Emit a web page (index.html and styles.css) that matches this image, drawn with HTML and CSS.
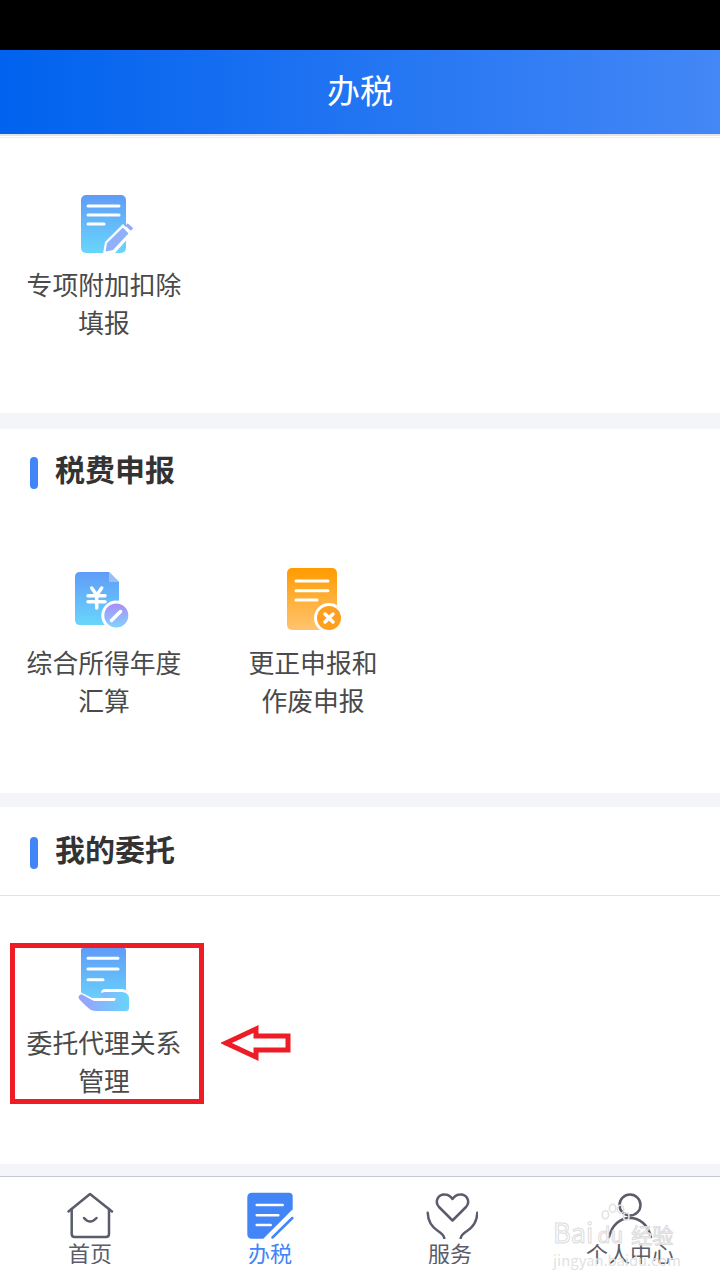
FILE: index.html
```html
<!DOCTYPE html>
<html lang="zh-CN">
<head>
    <meta charset="UTF-8">
    <meta name="viewport" content="width=device-width, initial-scale=1.0">
    <title>办税</title>
    <link rel="stylesheet" href="styles.css">
</head>
<body>
    <div class="page">
        <div class="status-bar"></div>
        <header class="top-bar">办税</header>

        <main class="content">
            <section class="panel panel-first">
                <div class="item-grid">
                    <div class="item">
                        <svg class="item-icon" viewBox="0 0 64 64">
                            <defs>
                                <linearGradient id="blueDoc" x1="0" y1="0" x2="0" y2="1">
                                    <stop offset="0" stop-color="#5f9cf8"/>
                                    <stop offset="1" stop-color="#69d6fb"/>
                                </linearGradient>
                            </defs>
                            <rect x="9" y="5" width="45" height="58" rx="5" fill="url(#blueDoc)"/>
                            <path d="M16 16H47M16 25H47M16 34H32" stroke="#fff" stroke-width="3" stroke-linecap="round"/>
                            <path d="M31 64L33 52L51 34L60 44L42 64Z" fill="#fff"/>
                            <path d="M33.500 61.500L35 53L51 37.500L56.500 43.500L41 60Z" fill="#8fb0fb"/>
                            <path d="M54.500 34.500L60 39.500" stroke="#93a8fa" stroke-width="3.500"/>
                        </svg>
                        <div class="item-name">专项附加扣除<br>填报</div>
                    </div>
                </div>
            </section>

            <section class="panel panel-filing">
                <div class="panel-head panel-head-plain"><span class="head-bar"></span>税费申报</div>
                <div class="item-grid">
                    <div class="item">
                        <svg class="item-icon" viewBox="0 0 64 64">
                            <defs>
                                <linearGradient id="blueDoc2" x1="0" y1="0" x2="0" y2="1">
                                    <stop offset="0" stop-color="#5f9cf8"/>
                                    <stop offset="1" stop-color="#69d6fb"/>
                                </linearGradient>
                                <linearGradient id="purpleDot" x1="0" y1="0" x2="0" y2="1">
                                    <stop offset="0" stop-color="#a98cf8"/>
                                    <stop offset="1" stop-color="#84d2fd"/>
                                </linearGradient>
                            </defs>
                            <path d="M8 4H37L47 14V52Q47 57 42 57H8Q3 57 3 52V9Q3 4 8 4Z" fill="url(#blueDoc2)"/>
                            <path d="M37 4L47 14H37Z" fill="#9dbdf9"/>
                            <path d="M19.700 20L24.700 27L29.700 20M16 27.700H33M16 33.700H33M24.700 27V40" fill="none" stroke="#fff" stroke-width="3.500" stroke-linecap="round" stroke-linejoin="round"/>
                            <circle cx="44.300" cy="47.500" r="15" fill="#fff"/>
                            <circle cx="44.300" cy="47.500" r="12" fill="url(#purpleDot)"/>
                            <path d="M39.500 52.500L48.500 43.500" stroke="#fff" stroke-width="3.500" stroke-linecap="round"/>
                        </svg>
                        <div class="item-name">综合所得年度<br>汇算</div>
                    </div>
                    <div class="item">
                        <svg class="item-icon" viewBox="0 0 64 64">
                            <defs>
                                <linearGradient id="orangeDoc" x1="0" y1="0" x2="0" y2="1">
                                    <stop offset="0" stop-color="#ff9b00"/>
                                    <stop offset="1" stop-color="#ffc470"/>
                                </linearGradient>
                            </defs>
                            <rect x="6" y="0" width="50" height="62" rx="5" fill="url(#orangeDoc)"/>
                            <path d="M15 13H47M15 22.700H47M15 32H36" stroke="#fff" stroke-width="3" stroke-linecap="round"/>
                            <circle cx="48" cy="50" r="15" fill="#fff"/>
                            <circle cx="48" cy="50" r="12" fill="#ff9f1e"/>
                            <path d="M44 46L52 54M52 46L44 54" stroke="#fff" stroke-width="3.500" stroke-linecap="round"/>
                        </svg>
                        <div class="item-name">更正申报和<br>作废申报</div>
                    </div>
                </div>
            </section>

            <section class="panel panel-entrust">
                <div class="panel-head panel-head-line"><span class="head-bar"></span>我的委托</div>
                <div class="item-grid">
                    <div class="item">
                        <svg class="item-icon" viewBox="0 0 64 64">
                            <defs>
                                <linearGradient id="blueDoc3" x1="0" y1="0" x2="0" y2="1">
                                    <stop offset="0" stop-color="#5f9cf8"/>
                                    <stop offset="1" stop-color="#69cffb"/>
                                </linearGradient>
                                <linearGradient id="handFill" x1="0" y1="0" x2="1" y2="0">
                                    <stop offset="0" stop-color="#9a9ffb"/>
                                    <stop offset="1" stop-color="#68d4fb"/>
                                </linearGradient>
                            </defs>
                            <path d="M11 0H52Q54 0 54 2V50H9V2Q9 0 11 0Z" fill="url(#blueDoc3)"/>
                            <path d="M16 10.300H46M16 21H46M16 31.700H31" stroke="#fff" stroke-width="3" stroke-linecap="round"/>
                            <path d="M0 46H8L22 53H42C44 53 44 49 42 49H33C28 49 28 43 33 43H50C54 43 57 47 57 50V64H0Z" fill="#fff" transform="translate(0 -2)"/>
                            <path d="M8 47C9 46 10 46 11 47L22 53H42C44 53 44 49 42 49H33C28 49 28 44 33 44H50C54 44 57 47 57 50V60C57 62 56 63 54 63H24C20 63 17 61 14 58L8 52C6 50 6 48 8 47Z" fill="url(#handFill)"/>
                        </svg>
                        <div class="item-name">委托代理关系<br>管理</div>
                    </div>
                </div>
            </section>
        </main>

        <nav class="tab-bar">
            <div class="tab">
                <svg class="tab-icon" viewBox="0 0 48 48" fill="none" stroke="#5a5c6b" stroke-width="2.500" stroke-linecap="round" stroke-linejoin="round">
                    <path d="M2.500 20.500L24 3L46 20.500"/>
                    <path d="M5.700 18V43Q5.700 46 8.700 46H40Q43 46 43 43V18"/>
                    <path d="M18 27Q24 34 30.500 27"/>
                </svg>
                <div class="tab-name">首页</div>
            </div>
            <div class="tab tab-active">
                <svg class="tab-icon" viewBox="0 0 48 48">
                    <path d="M6 1.700H43Q46.700 1.700 46.700 5.400V18.300L17.300 47.700H6Q1.300 47.700 1.300 43V6.400Q1.300 1.700 6 1.700Z" fill="#4285f7"/>
                    <path d="M10.700 14H36.700M10.700 24.300H32.300M10.700 34H24.700" stroke="#fff" stroke-width="2.500" stroke-linecap="round"/>
                    <path d="M46.300 27L26.500 46.500" stroke="#4285f7" stroke-width="2.500" stroke-linecap="round"/>
                </svg>
                <div class="tab-name">办税</div>
            </div>
            <div class="tab">
                <svg class="tab-icon tab-icon-wide" viewBox="0 0 56 48" fill="none" stroke="#5a5c6b" stroke-width="2.500" stroke-linecap="round" stroke-linejoin="round">
                    <path d="M30.500 29.500L17 16C12 10 16.500 3 23 3.500C26.500 3.500 29 6 30.500 8C32 6 34.500 3.500 38 3.500C44.500 3 49 10 44 16Z"/>
                    <path d="M5.700 21.700C6 31 10 36 16 40C20 42.500 22 45 22.300 47.300"/>
                    <path d="M55.300 21.700C55 31 51 36 45 40C41 42.500 39 45 38.700 47.300"/>
                </svg>
                <div class="tab-name">服务</div>
            </div>
            <div class="tab">
                <svg class="tab-icon" viewBox="0 0 48 48" fill="none" stroke="#5a5c6b" stroke-width="2.500" stroke-linecap="round">
                    <circle cx="24" cy="14" r="10.500"/>
                    <path d="M3 46C6 34 14 27 24 27C34 27 42 34 45 46"/>
                </svg>
                <div class="tab-name">个人中心</div>
            </div>
        </nav>

        <!-- red markup drawn on top of the screenshot -->
        <div class="mark-box"></div>
        <svg class="mark-arrow" viewBox="0 0 72 40">
            <path d="M5 19L35 5V12H67V26H35V33Z" fill="#fff" stroke="#ee1c25" stroke-width="5"/>
        </svg>

        <div class="watermark">
            <svg class="watermark-paw" viewBox="0 0 40 40" fill="none" stroke="#e2e2e2" stroke-width="2">
                <ellipse cx="8" cy="16" rx="4" ry="5"/>
                <ellipse cx="17" cy="8" rx="4" ry="5"/>
                <ellipse cx="27" cy="9" rx="4" ry="5"/>
                <ellipse cx="34" cy="18" rx="3.500" ry="4.500"/>
            </svg>
            <div class="watermark-logo">Bai<span class="watermark-du">du</span><span class="watermark-cn">经验</span></div>
            <div class="watermark-url">jingyan.baidu.com</div>
        </div>
    </div>
</body>
</html>
```

FILE: styles.css
```css
* {
    box-sizing: border-box;
}

body {
    margin: 0;
    font-family: "Noto Sans CJK SC", "Noto Sans", sans-serif;
    background-color: #fff;
}

.page {
    position: relative;
    width: 720px;
    height: 1280px;
    overflow: hidden;
    background-color: #f4f5f9;
}

.status-bar {
    height: 50px;
    background-color: #000;
}

.top-bar {
    position: relative;
    height: 86px;
    border-bottom: 2px solid #e3e3e7;
    background: linear-gradient(90deg, #0062ee, #4487f6);
    box-shadow: 0 1px 0 #fff, 0 2px 0 #eeeef1;
    color: #fff;
    font-size: 33px;
    line-height: 78px;
    text-align: center;
}

.panel {
    background-color: #fff;
}

.panel-first {
    height: 277px;
    padding-top: 54px;
    margin-bottom: 16px;
}

.panel-filing {
    height: 364px;
    margin-bottom: 14px;
}

.panel-entrust {
    height: 357px;
    margin-bottom: 12px;
}

.panel-head {
    display: flex;
    align-items: center;
    gap: 17px;
    padding-left: 30px;
    color: #333;
    font-size: 30px;
    font-weight: 700;
}

.panel-head-plain {
    height: 78px;
    margin-bottom: 61px;
}

.panel-head-line {
    height: 89px;
    padding-bottom: 7px;
    margin-bottom: 52px;
    border-bottom: 1px solid #e2e2e6;
}

.head-bar {
    width: 8px;
    height: 32px;
    margin-top: 10px;
    border-radius: 4px;
    background-color: #4285f7;
}

.item-grid {
    display: grid;
    grid-template-columns: 208px 208px;
    column-gap: 1px;
}

.item {
    display: flex;
    flex-direction: column;
    align-items: center;
}

.item-icon {
    display: block;
    width: 64px;
    height: 64px;
    margin-bottom: 11px;
}

.item-name {
    color: #4a4a4a;
    font-size: 25.800px;
    line-height: 38px;
    text-align: center;
}

.tab-bar {
    display: flex;
    height: 104px;
    padding-top: 14px;
    border-top: 1px solid #c8c8d0;
    background-color: #fff;
}

.tab {
    display: flex;
    flex-direction: column;
    align-items: center;
    width: 180px;
    color: #5a5c6b;
}

.tab-active {
    color: #4285f7;
}

.tab-icon {
    display: block;
    width: 48px;
    height: 48px;
}

.tab-icon-wide {
    width: 56px;
}

.tab-name {
    height: 23px;
    overflow: hidden;
    margin-top: 2px;
    font-size: 22px;
    line-height: 23px;
}

.mark-box {
    position: absolute;
    left: 10px;
    top: 943px;
    width: 194px;
    height: 161px;
    border: 5px solid #ee1c25;
}

.mark-arrow {
    position: absolute;
    left: 221px;
    top: 1024px;
    width: 72px;
    height: 40px;
}

.watermark {
    position: absolute;
    left: 553px;
    top: 1205px;
    width: 130px;
    height: 60px;
    pointer-events: none;
}

.watermark-paw {
    position: absolute;
    left: 46px;
    top: -3px;
    width: 32px;
    height: 32px;
}

.watermark-logo {
    position: absolute;
    left: 0;
    top: 12px;
    color: rgba(255, 255, 255, 0.6);
    font-size: 27px;
    line-height: 30px;
    white-space: nowrap;
    -webkit-text-stroke: 1px #dcdcdc;
}

.watermark-du {
    margin-left: 4px;
    font-size: 21px;
}

.watermark-cn {
    margin-left: 8px;
    font-size: 21px;
}

.watermark-url {
    position: absolute;
    left: 0;
    top: 45px;
    color: #e2e2e2;
    font-size: 14.800px;
    line-height: 20px;
    white-space: nowrap;
}
```
